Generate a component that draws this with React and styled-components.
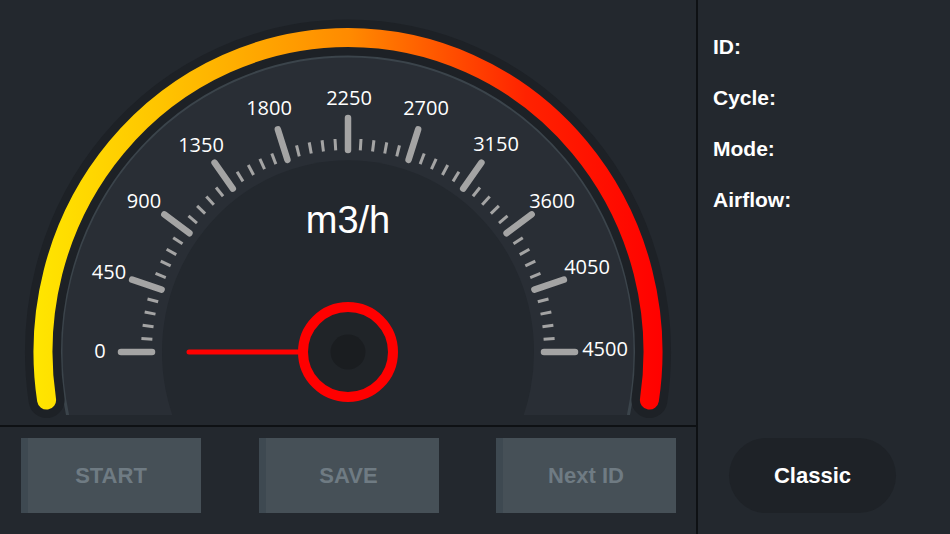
import React from "react";
import styled, { createGlobalStyle } from "styled-components";

const GlobalStyle = createGlobalStyle`
  html, body { margin: 0; padding: 0; background: #23282e; }
  body { font-family: "Liberation Sans", Arial, sans-serif; }
`;

const Screen = styled.div`
  width: 950px;
  height: 534px;
  display: grid;
  grid-template-columns: 696px 2px 1fr;
  background: #23282e;
  overflow: hidden;
`;

const LeftPane = styled.div`
  display: grid;
  grid-template-rows: 425px 2px 1fr;
`;

const GaugeArea = styled.div`
  display: flex;
  svg { display: block; }
`;

const Rule = styled.div`
  background: #0e1114;
`;

const ButtonRow = styled.div`
  display: flex;
  justify-content: space-between;
  align-items: flex-start;
  padding: 11px 20px 0 21px;
`;

const ActionButton = styled.button`
  width: 180px;
  height: 75px;
  border: none;
  box-shadow: inset 7px 0 0 #3e4951;
  background: #465057;
  color: #6f7b83;
  font-family: "Liberation Sans", Arial, sans-serif;
  font-weight: 700;
  font-size: 22px;
  padding: 0;
  cursor: default;
`;

const SidePanel = styled.div`
  display: flex;
  flex-direction: column;
  padding: 21px 0 21px 15px;
`;

const InfoLabel = styled.div`
  color: #ffffff;
  font-size: 21px;
  font-weight: 700;
  line-height: 51px;
`;

const ModeButton = styled.button`
  margin-top: auto;
  margin-left: 16px;
  width: 167px;
  height: 75px;
  border: none;
  border-radius: 38px;
  background: #1e2227;
  color: #ffffff;
  font-family: "Liberation Sans", Arial, sans-serif;
  font-weight: 700;
  font-size: 22px;
  padding: 0;
`;

const CX = 348;
const CY = 352;
const K = 1.031;

const pt = (deg, r) => {
  const a = (deg * Math.PI) / 180;
  return [CX + r * Math.cos(a), CY - r * K * Math.sin(a)];
};

const arcPath = (r, a1, a2) => {
  const [x1, y1] = pt(a1, r);
  const [x2, y2] = pt(a2, r);
  return `M ${x1} ${y1} A ${r} ${r * K} 0 1 1 ${x2} ${y2}`;
};

const labels = [
  ["0", 100, 350],
  ["450", 109, 271],
  ["900", 144, 200],
  ["1350", 201, 144],
  ["1800", 269, 107],
  ["2250", 349, 97],
  ["2700", 426, 107],
  ["3150", 496, 143],
  ["3600", 552, 200],
  ["4050", 587, 266],
  ["4500", 605, 348],
];

function Gauge() {
  const ticks = [];
  for (let i = 0; i <= 50; i++) {
    const ang = 180 - i * 3.6;
    const major = i % 5 === 0;
    const [x1, y1] = pt(ang, 196);
    const [x2, y2] = pt(ang, major ? 227 : 207);
    ticks.push(
      <line
        key={i}
        x1={x1}
        y1={y1}
        x2={x2}
        y2={y2}
        stroke="#a4a4a4"
        strokeWidth={major ? 6.5 : 3}
        strokeLinecap={major ? "round" : "butt"}
      />
    );
  }
  return (
    <svg width="696" height="425" viewBox="0 0 696 425">
      <defs>
        <linearGradient id="band" x1="35" y1="0" x2="665" y2="0" gradientUnits="userSpaceOnUse">
          <stop offset="0" stopColor="#ffe600" />
          <stop offset="0.2" stopColor="#ffc400" />
          <stop offset="0.5" stopColor="#ff8a00" />
          <stop offset="0.78" stopColor="#ff2200" />
          <stop offset="1" stopColor="#ff0000" />
        </linearGradient>
        <clipPath id="faceClip">
          <rect x="0" y="0" width="696" height="415" />
        </clipPath>
      </defs>
      <g clipPath="url(#faceClip)">
        <ellipse cx={CX} cy={CY} rx="287" ry={287 * K} fill="#292e35" stroke="#3b444b" strokeWidth="3" />
        <ellipse cx={CX} cy={CY} rx="186" ry={186 * K} fill="#23282e" />
      </g>
      <path d={arcPath(305, 188.8, -8.8)} fill="none" stroke="#1d2126" strokeWidth="36" strokeLinecap="round" />
      <path d={arcPath(305, 188.8, -8.8)} fill="none" stroke="url(#band)" strokeWidth="19" strokeLinecap="round" />
      {ticks}
      {labels.map(([t, x, y]) => (
        <text
          key={t}
          x={x}
          y={y}
          textAnchor="middle"
          dominantBaseline="central"
          fill="#ffffff"
          fontFamily="'Open Sans', 'DejaVu Sans', sans-serif"
          fontSize="20"
        >
          {t}
        </text>
      ))}
      <text
        x={CX}
        y={233}
        textAnchor="middle"
        fill="#ffffff"
        fontFamily="'Liberation Sans', Arial, sans-serif"
        fontSize="38"
      >
        m3/h
      </text>
      <line x1="189" y1="352" x2="300" y2="352" stroke="#ff0000" strokeWidth="5" strokeLinecap="round" />
      <circle cx={CX} cy="352" r="45" fill="#202428" stroke="#ff0000" strokeWidth="10" />
      <circle cx={CX} cy="352" r="17.5" fill="#1a1d20" />
    </svg>
  );
}

export default function App() {
  return (
    <>
      <GlobalStyle />
      <Screen>
        <LeftPane>
          <GaugeArea>
            <Gauge />
          </GaugeArea>
          <Rule />
          <ButtonRow>
            <ActionButton>START</ActionButton>
            <ActionButton>SAVE</ActionButton>
            <ActionButton>Next ID</ActionButton>
          </ButtonRow>
        </LeftPane>
        <Rule />
        <SidePanel>
          <InfoLabel>ID:</InfoLabel>
          <InfoLabel>Cycle:</InfoLabel>
          <InfoLabel>Mode:</InfoLabel>
          <InfoLabel>Airflow:</InfoLabel>
          <ModeButton>Classic</ModeButton>
        </SidePanel>
      </Screen>
    </>
  );
}
